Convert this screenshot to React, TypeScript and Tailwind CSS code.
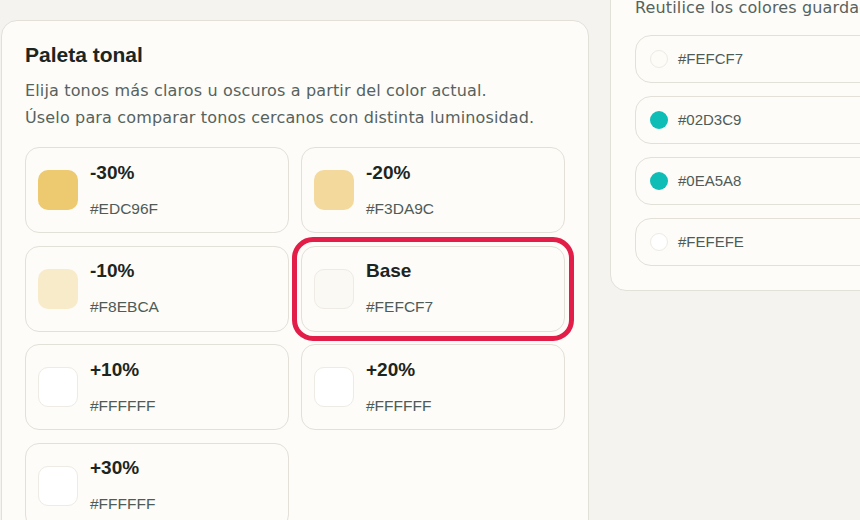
import React from "react";

const tones = [
  { label: "-30%", hex: "#EDC96F", color: "#EDC96F", border: false },
  { label: "-20%", hex: "#F3DA9C", color: "#F3DA9C", border: false },
  { label: "-10%", hex: "#F8EBCA", color: "#F8EBCA", border: false },
  { label: "Base", hex: "#FEFCF7", color: "#FAF9F4", border: true, selected: true },
  { label: "+10%", hex: "#FFFFFF", color: "#FFFFFF", border: true },
  { label: "+20%", hex: "#FFFFFF", color: "#FFFFFF", border: true },
  { label: "+30%", hex: "#FFFFFF", color: "#FFFFFF", border: true },
];

const saved = [
  { hex: "#FEFCF7", color: "#FEFCF7", light: true },
  { hex: "#02D3C9", color: "#0DBDB6", light: false },
  { hex: "#0EA5A8", color: "#0DBDB6", light: false },
  { hex: "#FEFEFE", color: "#FFFFFF", light: true },
];

export default function App() {
  return (
    <div
      className="w-[860px] h-[520px] overflow-hidden bg-[#f4f3ef] flex items-start"
      style={{ fontFamily: '"Liberation Sans", Arial, sans-serif' }}
    >
      <section className="ml-[1px] mt-[20px] w-[588px] shrink-0 rounded-2xl border border-[#e3e0d8] bg-[#fdfcf8] px-[23px] pt-[20px] pb-6">
        <h2 className="text-[21px] leading-[28px] font-bold text-[#1d2522]">Paleta tonal</h2>
        <p className="mt-2 font-['DejaVu_Sans',sans-serif] text-[16px] leading-[27px] tracking-[0.15px] text-[#56625e]">
          Elija tonos más claros u oscuros a partir del color actual.
          <br />
          Úselo para comparar tonos cercanos con distinta luminosidad.
        </p>
        <div className="mt-4 grid grid-cols-2 gap-x-3 gap-y-[12.5px]">
          {tones.map((t) => (
            <div key={t.label} className="relative">
              <div className="flex h-[86px] items-center gap-3 rounded-[14px] border border-[#e3e0d8] bg-[#fdfcf8] px-3">
                <div
                  className={`h-10 w-10 shrink-0 rounded-[10px] ${t.border ? "border border-[#eeebe4]" : ""}`}
                  style={{ backgroundColor: t.color }}
                />
                <div className="flex flex-col gap-[15px]">
                  <span className="text-[19px] leading-[22px] font-bold text-[#1d2522]">{t.label}</span>
                  <span className="text-[15.5px] leading-[20px] text-[#4f5b57]">{t.hex}</span>
                </div>
              </div>
              {t.selected && (
                <div className="pointer-events-none absolute -inset-[9px] rounded-[21px] border-[5px] border-[#e11d48]" />
              )}
            </div>
          ))}
        </div>
      </section>
      <section className="ml-[21px] -mt-[63px] w-[300px] shrink-0 rounded-2xl border border-[#e3e0d8] bg-[#fdfcf8] px-6 pt-[20px] pb-6">
        <h2 className="text-[20px] leading-[28px] font-bold text-[#1d2522]">Colores guardados</h2>
        <p className="mt-2 font-['DejaVu_Sans',sans-serif] text-[16px] leading-[27px] tracking-[0.15px] whitespace-nowrap text-[#56625e]">
          Reutilice los colores guardados en su biblioteca.
        </p>
        <div className="mt-[14px] flex flex-col gap-[13px]">
          {saved.map((s) => (
            <div
              key={s.hex}
              className="flex h-[48px] items-center gap-[10px] rounded-[16px] border border-[#e3e0d8] bg-[#fdfcf8] px-[14px]"
            >
              <span
                className={`h-[18px] w-[18px] shrink-0 rounded-full ${s.light ? "border border-[#eeebe4]" : ""}`}
                style={{ backgroundColor: s.color }}
              />
              <span className="text-[15px] text-[#4f5b57]">{s.hex}</span>
            </div>
          ))}
        </div>
      </section>
    </div>
  );
}
